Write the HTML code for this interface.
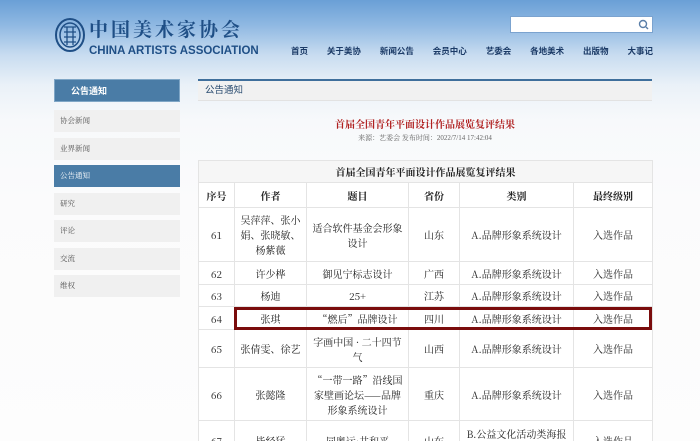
<!DOCTYPE html>
<html style="width:700px;height:441px;overflow:hidden;background:#fdfdfd"><head><meta charset="utf-8"><style>
*{margin:0;padding:0;box-sizing:border-box}
body{width:700px;height:441px;overflow:hidden;position:relative;font-family:"Liberation Serif","Noto Serif CJK SC",serif;background:linear-gradient(180deg,#6a9fd6 0px,#8fb8e2 25px,#c8dcf0 55px,#eaf1f8 85px,#f7f9fb 120px,#fbfbfc 200px,#fdfdfd 441px) no-repeat;background-size:700px 441px}
.abs{position:absolute}
.logo{left:55px;top:14px}
.nav{top:45px;left:291px;font:bold 8.5px "Liberation Sans","Noto Sans CJK SC",sans-serif;color:#1b3a66;display:flex}
.search{left:510px;top:16px;width:143px;height:17px;background:#fff;border:1px solid #7ba3cf}
.sb{left:54px;width:126px;height:22px;background:#f0f0f0;font-size:7.5px;color:#555;padding-left:6px;line-height:22px;font-family:"Noto Serif CJK SC",serif}
.sbh{left:54px;top:79px;width:126px;height:23px;background:#4a7ca6;color:#fff;font:bold 9px "Liberation Sans","Noto Sans CJK SC",sans-serif;line-height:23px;padding-left:16px;border:1px solid #7fa6c6}
.ch{left:198px;top:79px;width:454px;height:22px;background:#f1f1f1;border-top:2px solid #3f6f9c;border-bottom:1px solid #e2e2e2;font:9.5px "Liberation Sans","Noto Sans CJK SC",sans-serif;color:#2a4c70;line-height:20px;padding-left:7px}
table{position:absolute;left:198px;top:160px;width:454px;border-collapse:collapse;background:#fff;font-size:10px;color:#222;font-family:"Noto Serif CJK SC",serif;table-layout:fixed}
td{border:1px solid #e4e4e4;text-align:center;vertical-align:middle;line-height:15px;padding:0 5px}
td.t{padding:0 3px}
</style></head><body>
<svg class="abs logo" width="210" height="44" viewBox="0 0 210 44">
<ellipse cx="15" cy="21" rx="14" ry="16" fill="none" stroke="#1f4f86" stroke-width="2"/>
<ellipse cx="15" cy="21" rx="10" ry="12" fill="none" stroke="#1f4f86" stroke-width="1.5"/>
<path d="M9 13h12M9 18h12M9 23h12M9 28h12M12 13v18M18 13v18" stroke="#1f4f86" stroke-width="1.3" fill="none"/>
<text x="34" y="22" font-family="Noto Serif CJK SC,serif" font-weight="bold" font-size="19" fill="#1f4f86" letter-spacing="3">中国美术家协会</text>
<text x="34" y="40" font-family="Liberation Sans,sans-serif" font-weight="bold" font-size="11.5" fill="#1f4f86">CHINA ARTISTS ASSOCIATION</text>
</svg>
<div class="abs search"><svg class="abs" style="right:3px;top:2px" width="11" height="11"><circle cx="5" cy="5" r="3.5" fill="none" stroke="#5a7ea8" stroke-width="1.4"/><path d="M8 8l2 2" stroke="#5a7ea8" stroke-width="1.4"/></svg></div>
<div class="abs nav" style="width:362px;justify-content:space-between"><span>首页</span><span>关于美协</span><span>新闻公告</span><span>会员中心</span><span>艺委会</span><span>各地美术</span><span>出版物</span><span>大事记</span></div>
<div class="abs sbh">公告通知</div>
<div class="abs sb" style="top:110px">协会新闻</div>
<div class="abs sb" style="top:138px">业界新闻</div>
<div class="abs sb" style="top:165px;background:#4a7ca6;color:#fff">公告通知</div>
<div class="abs sb" style="top:193px">研究</div>
<div class="abs sb" style="top:220px">评论</div>
<div class="abs sb" style="top:248px">交流</div>
<div class="abs sb" style="top:275px">维权</div>
<div class="abs ch">公告通知</div>
<div class="abs" style="left:198px;width:454px;top:116px;text-align:center;color:#b02020;font-size:10px;font-weight:bold">首届全国青年平面设计作品展览复评结果</div>
<div class="abs" style="left:198px;width:454px;top:133px;text-align:center;color:#666;font-size:7px">来源：艺委会 发布时间：2022/7/14 17:42:04</div>
<table>
<colgroup><col style="width:36px"><col style="width:72px"><col style="width:102px"><col style="width:51px"><col style="width:114px"><col style="width:79px"></colgroup>
<tr style="height:22px;background:#f6f6f6"><td colspan="6" style="font-weight:bold">首届全国青年平面设计作品展览复评结果</td></tr>
<tr style="height:25px;font-weight:bold"><td>序号</td><td>作者</td><td>题目</td><td>省份</td><td>类别</td><td>最终级别</td></tr>
<tr style="height:54px"><td>61</td><td>吴萍萍、张小娟、张晓敏、杨紫薇</td><td class="t">适合软件基金会形象设计</td><td>山东</td><td>A.品牌形象系统设计</td><td>入选作品</td></tr>
<tr style="height:23px"><td>62</td><td>许少桦</td><td class="t">御见宁标志设计</td><td>广西</td><td>A.品牌形象系统设计</td><td>入选作品</td></tr>
<tr style="height:22px"><td>63</td><td>杨迪</td><td class="t">25+</td><td>江苏</td><td>A.品牌形象系统设计</td><td>入选作品</td></tr>
<tr style="height:23px"><td>64</td><td>张琪</td><td class="t">“燃后”品牌设计</td><td>四川</td><td>A.品牌形象系统设计</td><td>入选作品</td></tr>
<tr style="height:38px"><td>65</td><td>张倩雯、徐艺</td><td class="t">字画中国 · 二十四节气</td><td>山西</td><td>A.品牌形象系统设计</td><td>入选作品</td></tr>
<tr style="height:53px"><td>66</td><td>张懿隆</td><td class="t">“一带一路”沿线国家壁画论坛——品牌形象系统设计</td><td>重庆</td><td>A.品牌形象系统设计</td><td>入选作品</td></tr>
<tr style="height:40px"><td>67</td><td>毕经猛</td><td class="t">同奥运·共和平</td><td>山东</td><td>B.公益文化活动类海报设计</td><td>入选作品</td></tr>
</table>
<div class="abs" style="left:234px;top:307px;width:418px;height:23px;border:3px solid #7a0c0c"></div>
</body></html>
